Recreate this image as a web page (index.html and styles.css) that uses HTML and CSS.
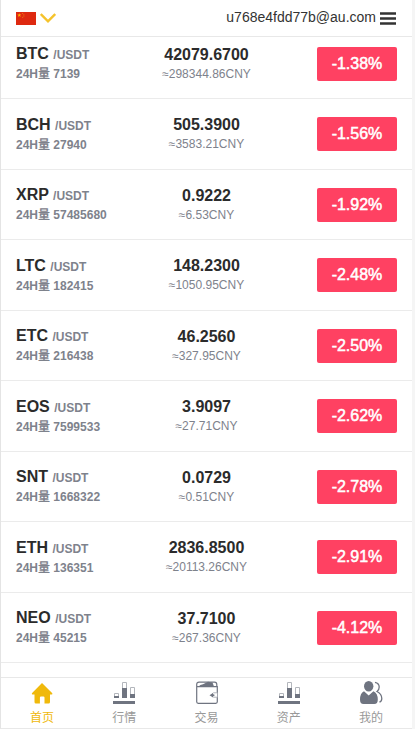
FILE: index.html
```
<!DOCTYPE html>
<html lang="zh-CN">
<head>
  <meta charset="UTF-8" />
  <meta name="viewport" content="width=device-width, initial-scale=1.0"/>
  <title>首页</title>
  <link rel="stylesheet" href="styles.css">
</head>
<body>
  <div class="app">
    <header class="header">
      <div class="lang">
        <svg class="flag" viewBox="0 0 20 13">
          <rect width="20" height="13" fill="#de2910"/>
          <path d="M3.3 1.2l.5 1.4h1.5l-1.2.9.5 1.4-1.3-.9-1.2.9.4-1.4-1.2-.9h1.5z" fill="#ffb400"/>
          <g fill="#f08a10">
            <circle cx="6.7" cy="1.5" r=".5"/>
            <circle cx="7.9" cy="2.7" r=".5"/>
            <circle cx="7.9" cy="4.1" r=".5"/>
            <circle cx="6.7" cy="5.3" r=".5"/>
          </g>
        </svg>
        <svg class="arrow" viewBox="0 0 16 10">
          <path d="M.8 1L8 8.3 15.2 1" fill="none" stroke="#f5c32c" stroke-width="2.4"/>
        </svg>
      </div>
      <div class="user">
        <span>u768e4fdd77b@au.com</span>
        <svg class="menu" viewBox="0 0 16 13">
          <path d="M0 1.5h16M0 6.5h16M0 11.5h16" stroke="#333" stroke-width="2.6"/>
        </svg>
      </div>
    </header>

    <main class="list">
      <div class="row">
        <div class="coin"><p class="name">BTC <small>/USDT</small></p><p class="vol">24H量 7139</p></div>
        <div class="price"><p class="num">42079.6700</p><p class="cny">≈298344.86CNY</p></div>
        <div class="rate">-1.38%</div>
      </div>
      <div class="row">
        <div class="coin"><p class="name">BCH <small>/USDT</small></p><p class="vol">24H量 27940</p></div>
        <div class="price"><p class="num">505.3900</p><p class="cny">≈3583.21CNY</p></div>
        <div class="rate">-1.56%</div>
      </div>
      <div class="row">
        <div class="coin"><p class="name">XRP <small>/USDT</small></p><p class="vol">24H量 57485680</p></div>
        <div class="price"><p class="num">0.9222</p><p class="cny">≈6.53CNY</p></div>
        <div class="rate">-1.92%</div>
      </div>
      <div class="row">
        <div class="coin"><p class="name">LTC <small>/USDT</small></p><p class="vol">24H量 182415</p></div>
        <div class="price"><p class="num">148.2300</p><p class="cny">≈1050.95CNY</p></div>
        <div class="rate">-2.48%</div>
      </div>
      <div class="row">
        <div class="coin"><p class="name">ETC <small>/USDT</small></p><p class="vol">24H量 216438</p></div>
        <div class="price"><p class="num">46.2560</p><p class="cny">≈327.95CNY</p></div>
        <div class="rate">-2.50%</div>
      </div>
      <div class="row">
        <div class="coin"><p class="name">EOS <small>/USDT</small></p><p class="vol">24H量 7599533</p></div>
        <div class="price"><p class="num">3.9097</p><p class="cny">≈27.71CNY</p></div>
        <div class="rate">-2.62%</div>
      </div>
      <div class="row">
        <div class="coin"><p class="name">SNT <small>/USDT</small></p><p class="vol">24H量 1668322</p></div>
        <div class="price"><p class="num">0.0729</p><p class="cny">≈0.51CNY</p></div>
        <div class="rate">-2.78%</div>
      </div>
      <div class="row">
        <div class="coin"><p class="name">ETH <small>/USDT</small></p><p class="vol">24H量 136351</p></div>
        <div class="price"><p class="num">2836.8500</p><p class="cny">≈20113.26CNY</p></div>
        <div class="rate">-2.91%</div>
      </div>
      <div class="row">
        <div class="coin"><p class="name">NEO <small>/USDT</small></p><p class="vol">24H量 45215</p></div>
        <div class="price"><p class="num">37.7100</p><p class="cny">≈267.36CNY</p></div>
        <div class="rate">-4.12%</div>
      </div>
    </main>

    <nav class="tabs">
      <a class="tab active">
        <svg viewBox="0 0 24 24">
          <path d="M12 2L22.300 12.200q.4 1.200-.6 1.300H20V21q0 1.500-1.400 1.500H14.500V16.600q0-1.100-1.100-1.100h-2.400q-1.100 0-1.100 1.100v5.900H5.900q-1.400 0-1.400-1.500v-7.500H2.600q-1-.1-.7-1.300z" fill="#f0b90b"/>
        </svg>
        <span>首页</span>
      </a>
      <a class="tab">
        <svg viewBox="0 0 24 24">
          <g fill="#fff" stroke="#b3b6bc">
            <path d="M2.500 12.500h4v4h-4zM10.500 1.500h4v15h-4zM18.500 6.500h4v10h-4z"/>
          </g>
          <path d="M2 15h5v2H2zM10 7h5v10h-5zM18 13h5v4h-5zM1 20h22v3H1z" fill="#6f7480"/>
        </svg>
        <span>行情</span>
      </a>
      <a class="tab">
        <svg viewBox="0 0 24 24">
          <path d="M1.700 5.500V3.500Q1.700 1.200 4 1.200h15.500q2.300 0 2.300 2.300v2M1.700 5.700h20.600v15.100q0 1.500-1.500 1.500H3.200q-1.500 0-1.500-1.500z" fill="none" stroke="#6f7480" stroke-width="1.200"/>
          <path d="M3.500 5.500Q5 3.700 8 3.200l5-2.400 4.500 .6 1.500 4z" fill="#6f7480"/>
          <path d="M22.300 11.800h-3.800q-3.300 2.200 0 4.400h3.800" fill="#fff" stroke="#b3b6bc"/>
          <path d="M18 12l-3.500 2.200L18 16.400z" fill="#6f7480"/>
          <circle cx="18.500" cy="14.200" r="1" fill="#6f7480"/>
        </svg>
        <span>交易</span>
      </a>
      <a class="tab">
        <svg viewBox="0 0 24 24">
          <g fill="#fff" stroke="#b3b6bc">
            <path d="M2.500 12.500h4v4h-4zM10.500 1.500h4v15h-4zM18.500 6.500h4v10h-4z"/>
          </g>
          <path d="M2 15h5v2H2zM10 7h5v10h-5zM18 13h5v4h-5zM1 20h22v3H1z" fill="#6f7480"/>
        </svg>
        <span>资产</span>
      </a>
      <a class="tab">
        <svg viewBox="0 0 24 24">
          <ellipse cx="9.700" cy="5.200" rx="4.700" ry="5.200" fill="#6f7480"/>
          <path d="M5 10.200l4.700 4.300 4.700-4.300q4.400 2 4.400 8.300 0 4.500-3.500 4.500H4.500Q1 23 1 18.500q0-6.300 4-8.300z" fill="#6f7480"/>
          <path d="M16 1.300q4.200 .9 4.200 4.700 0 3-2.200 4.500 4.800 2.500 4.800 7 0 3-2.300 3.500" fill="none" stroke="#6f7480" stroke-width="1.300"/>
        </svg>
        <span>我的</span>
      </a>
    </nav>
  </div>
</body>
</html>
```
FILE: styles.css
```
* {
  box-sizing: border-box;
}
body {
  margin: 0;
  background: #f5f5f5;
  font-family: "Liberation Sans", Arial, "Noto Sans CJK SC", sans-serif;
  color: #2b2b2b;
}
p {
  margin: 0;
}
.app {
  display: flex;
  flex-direction: column;
  width: 412px;
  height: 729px;
  background: #fff;
  border-left: 1px solid #e4e4e4;
  border-bottom: 1px solid #e8e8e8;
}
.header {
  display: flex;
  justify-content: space-between;
  align-items: center;
  height: 37px;
  padding: 0 16px 0 15px;
  border-bottom: 1px solid #e8e8e8;
}
.lang, .user {
  display: flex;
  align-items: center;
}
.flag {
  width: 20px;
  height: 13px;
  margin-right: 4px;
}
.arrow {
  width: 16px;
  height: 10px;
}
.user {
  font-size: 14px;
  line-height: 20px;
  color: #333;
  padding-bottom: 2px;
}
.menu {
  width: 16px;
  height: 13px;
  margin: 2px 0 0 4px;
}
.list {
  flex: 1;
  overflow: hidden;
}
.row {
  display: flex;
  align-items: center;
  height: 70.5px;
  padding: 0 15px;
  border-bottom: 1px solid #ebebeb;
}
/* first row is partly scrolled under the header */
.row:first-child {
  margin-top: -8.5px;
}
.coin, .price {
  width: 127px;
  padding-top: 1.5px;
}
.coin {
  font-weight: bold;
}
.price {
  text-align: center;
}
.name, .num {
  font-size: 16px;
  line-height: 20px;
}
.name small {
  font-size: 12px;
  color: #7e828c;
}
.vol, .cny {
  font-size: 12px;
  line-height: 19px;
  color: #7e828c;
}
.num {
  font-weight: bold;
}
.rate {
  width: 80px;
  height: 34px;
  margin: 1px 0 0 auto;
  border-radius: 2px;
  background: #ff4162;
  color: #fff;
  font-size: 16px;
  line-height: 34px;
  text-align: center;
  -webkit-text-stroke: 0.5px #fff;
}
.tabs {
  display: flex;
  height: 51px;
  border-top: 1px solid #e8e8e8;
}
.tab {
  flex: 1;
  display: flex;
  flex-direction: column;
  align-items: center;
  padding-top: 3px;
  font-size: 12px;
  line-height: 18px;
  color: #999;
}
.tab svg {
  width: 24px;
  height: 24px;
  margin-bottom: 4px;
}
.active {
  color: #f0b90b;
}
```
